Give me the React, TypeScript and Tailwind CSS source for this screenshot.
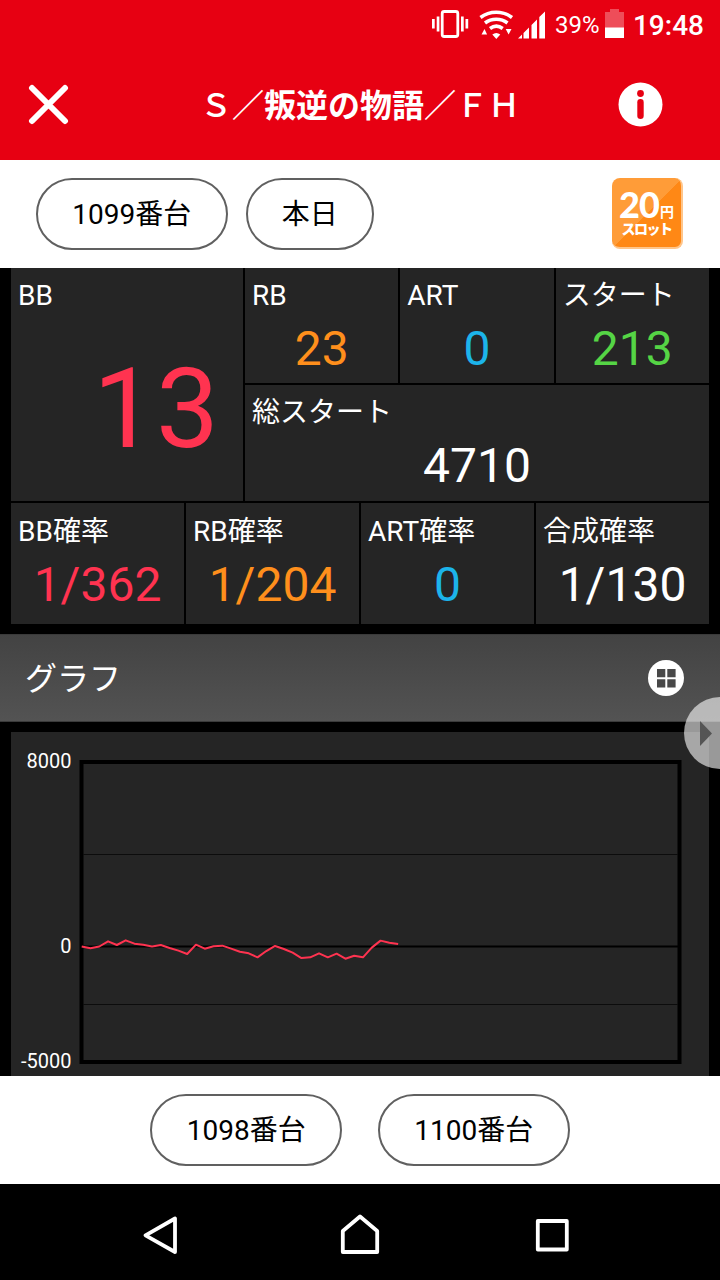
import type { ReactNode } from "react";

type StatProps = {
  label: string;
  value: string;
  color: string;
};

const slump = [
  0, -80, 0, 225, 65, 268, 123, 80, 0, 65, -65, -180, -326, 80, -94, 7, 36,
  -94, -225, -297, -471, -196, 22, -109, -268, -500, -471, -297, -471, -312,
  -529, -400, -471, -50, 254, 167, 109,
];

const topStats: StatProps[] = [
  { label: "RB", value: "23", color: "text-[#ff8f1c]" },
  { label: "ART", value: "0", color: "text-[#1cb4ea]" },
  { label: "スタート", value: "213", color: "text-[#55d545]" },
];

const rateStats: StatProps[] = [
  { label: "BB確率", value: "1/362", color: "text-[#ff3350]" },
  { label: "RB確率", value: "1/204", color: "text-[#ff8f1c]" },
  { label: "ART確率", value: "0", color: "text-[#1cb4ea]" },
  { label: "合成確率", value: "1/130", color: "text-white" },
];

function Stat({ label, value, color }: StatProps) {
  return (
    <div className="bg-[#252525] pt-2">
      <p className="pl-[7px] text-[28px] leading-10 text-white whitespace-nowrap">
        {label}
      </p>

      <p className={`text-center text-5xl leading-[65px] ${color}`}>{value}</p>
    </div>
  );
}

function Pill({ children }: { children: ReactNode }) {
  return (
    <button className="h-[72px] rounded-full border-2 border-[#606060] px-[34.3px] pt-[2px] text-[28px] text-black whitespace-nowrap">
      {children}
    </button>
  );
}

function StatusBar() {
  return (
    <div className="flex h-12 items-center justify-end pr-4 text-white">
      {/* VIBRATE, WIFI, SIGNAL */}
      <svg width="128" height="48" viewBox="430 0 128 48" fill="currentColor">
        <path d="M432 19h2.7v9.500h-2.700zM436.700 16.500h2.700v15h-2.700zM461 16.500h2.700v15h-2.700zM465.500 19h2.700v9.500h-2.700z" />
        <rect x="442.200" y="11.500" width="15.600" height="25" rx="2" fill="none" stroke="currentColor" strokeWidth="2.800" />
        <g fill="none" stroke="currentColor" strokeWidth="3.500">
          <path d="M480.500 17.500c9-7 22.500-7 31.500 0" />
          <path d="M485 23c6.500-5 16-5 22.500 0" />
          <path d="M490 28.500c4-3 8.700-3 12.700 0" />
        </g>
        <path d="M492.300 34.500q4-3 8 0l-4 4.500zM481.500 34.500l3-5.500 2.600 5.500zM505.700 29h5.800l-2.900 5.500z" />
        <path d="M518 38.500l4-4v4zM523.500 33l5.500-5.500v11h-5.500zM531.500 25l5.500-5.500v19h-5.500zM539.300 17l5.700-5.500v27h-5.700z" />
      </svg>

      <span className="-ml-[3px] w-[50px] text-2xl leading-none mt-[2px]">39%</span>

      <svg width="19" height="30" viewBox="0 0 19 30" fill="currentColor">
        <path d="M0 3h5V0h9v3h5v16H0z" opacity="0.3" />
        <path d="M0 18.500h19V29H0z" />
      </svg>

      <span className="ml-[9px] mt-[3px] text-[28px] font-medium leading-none">
        19:48
      </span>
    </div>
  );
}

function SlotBadge() {
  return (
    <div className="mb-[2px] flex h-[71px] w-[71px] flex-col items-center rounded-lg border-r-2 border-b-2 border-[#ffc58a] bg-[linear-gradient(135deg,#ff9c38_50%,#ff8815_50%)] bg-origin-border pt-[13px] text-white">
      <div className="flex h-[28px] items-end font-bold">
        <span className="font-[Lato] text-[36px] leading-[30px] font-black tracking-[-1px]">
          20
        </span>
        <span className="ml-px text-[14px] leading-[14px]">円</span>
      </div>

      <span className="mt-[2px] text-[14px] leading-[16px] font-black tracking-[-1.500px]">
        スロット
      </span>
    </div>
  );
}

function SlumpGraph() {
  const points = slump
    .map((v, i) => `${70.7 + i * 8.79},${214.5 - v / 43.4}`)
    .join(" ");

  return (
    <svg width="698" height="344" viewBox="0 0 698 344" className="bg-[#252525]">
      <rect x="70.500" y="30" width="598" height="300" fill="none" stroke="#000" strokeWidth="4" />
      <path d="M72 122.500H667M72 272.500H667" stroke="#0c0c0c" />
      <path d="M72 214.500H667" stroke="#000" strokeWidth="2" />

      <g fill="#fff" fontSize="20" textAnchor="end">
        <text x="60.500" y="36">8000</text>
        <text x="60.500" y="220.500">0</text>
        <text x="60.500" y="336">-5000</text>
      </g>

      <polyline points={points} fill="none" stroke="#ff3350" strokeWidth="2" strokeLinejoin="round" />
    </svg>
  );
}

export default function App() {
  return (
    <div className="relative flex h-[1280px] w-[720px] flex-col overflow-hidden bg-black font-[Roboto,'Noto_Sans_CJK_JP',sans-serif]">
      {/* HEADER */}
      <header className="h-40 shrink-0 bg-[#e70012] text-white">
        <StatusBar />

        <div className="flex h-28 items-center justify-between pr-[57px] pl-7">
          <svg width="41" height="41" viewBox="0 0 41 41" stroke="currentColor" strokeWidth="6" strokeLinecap="round">
            <path d="M4 4l33 33M37 4L4 37" />
          </svg>

          <h1 className="mt-[3px] ml-[33px] text-[32px] leading-none font-medium">
            Ｓ<span className="font-bold">／叛逆の物語／</span>ＦＨ
          </h1>

          <svg width="45" height="45" viewBox="0 0 45 45">
            <circle cx="22.500" cy="22.500" r="22" fill="#fff" />
            <circle cx="22.500" cy="11.500" r="3.400" fill="#e70012" />
            <rect x="19.300" y="17" width="6.400" height="20" rx="3.200" fill="#e70012" />
          </svg>
        </div>
      </header>

      {/* MACHINE / DATE */}
      <div className="flex h-[108px] shrink-0 items-center bg-white pr-[37px] pl-9">
        <div className="flex grow gap-[18px]">
          <Pill>1099番台</Pill>
          <Pill>本日</Pill>
        </div>
        <SlotBadge />
      </div>

      {/* STATS */}
      <div className="flex h-[356px] shrink-0 flex-col gap-[2px] px-[11px]">
        <div className="flex h-[233px] gap-[2px]">
          <div className="w-[232px] bg-[#252525] pt-2">
            <p className="pl-[7px] text-[28px] leading-10 text-white">BB</p>
            <p className="pr-6 text-right text-[112px] leading-[185px] text-[#ff3350]">
              13
            </p>
          </div>

          <div className="flex grow flex-col gap-[2px]">
            <div className="grid h-[115px] grid-cols-3 gap-[2px]">
              {topStats.map((s) => (
                <Stat key={s.label} {...s} />
              ))}
            </div>
            <div className="grid grow">
              <Stat label="総スタート" value="4710" color="text-white" />
            </div>
          </div>
        </div>

        <div className="grid grow grid-cols-4 gap-[2px] *:pt-[9px]">
          {rateStats.map((s) => (
            <Stat key={s.label} {...s} />
          ))}
        </div>
      </div>

      {/* GRAPH */}
      <div className="mt-[10px] flex h-[88px] shrink-0 items-center justify-between border-y border-[#3a3a3a] bg-linear-to-b from-[#434343] to-[#535353] pr-9 pl-[25px]">
        <h2 className="pt-[2px] text-[32px] leading-none text-white">グラフ</h2>

        <svg width="36" height="36" viewBox="0 0 36 36">
          <circle cx="18" cy="18" r="18" fill="#fff" />
          <path d="M9 9h8.300v8.300H9zM19.300 9h8.300v8.300h-8.300zM9 19.300h8.300v8.300H9zM19.300 19.300h8.300v8.300h-8.300z" fill="#484848" />
        </svg>
      </div>

      <div className="mt-[10px] shrink-0 px-[11px]">
        <SlumpGraph />
      </div>

      {/* PREV / NEXT MACHINE */}
      <div className="flex h-[108px] shrink-0 items-center justify-center gap-9 bg-white">
        <Pill>1098番台</Pill>
        <Pill>1100番台</Pill>
      </div>

      {/* NAVIGATION BAR */}
      <nav className="flex h-24 shrink-0 items-center pt-[7px] pl-[140px] text-white">
        <svg width="40" height="44" viewBox="0 0 40 44" fill="none" stroke="currentColor" strokeWidth="3.800" strokeLinejoin="round">
          <path d="M35 4.500v33.500L5.500 21.300z" />
        </svg>
        <svg className="ml-40" width="40" height="44" viewBox="0 0 40 44" fill="none" stroke="currentColor" strokeWidth="3.800" strokeLinejoin="round">
          <path d="M2.800 38V17L20 2.500 37.200 17v21z" />
        </svg>
        <svg className="ml-[152px]" width="40" height="44" viewBox="0 0 40 44" fill="none" stroke="currentColor" strokeWidth="3.800" strokeLinejoin="round">
          <rect x="5.800" y="7" width="29" height="28.500" />
        </svg>
      </nav>

      {/* FLOATING HANDLE */}
      <div className="absolute top-[697px] left-[684px] flex h-[72px] w-[72px] items-center rounded-full bg-white/60 pl-4">
        <svg width="12" height="25" viewBox="0 0 12 25" fill="#555">
          <path d="M0 0l12 12.500L0 25z" />
        </svg>
      </div>
    </div>
  );
}
